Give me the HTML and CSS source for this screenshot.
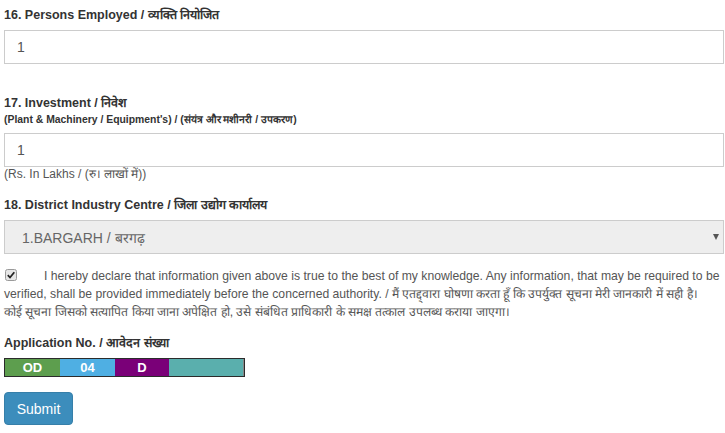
FILE: index.html
```html
<!DOCTYPE html>
<html lang="en">
<head>
  <meta charset="UTF-8" />
  <title>Application Form</title>
  <link rel="stylesheet" href="styles.css">
</head>
<body>

  <div class="form-wrap">

    <!-- 16 -->
    <div class="form-group">
      <label class="field-label">16. Persons Employed / व्यक्ति नियोजित</label>
      <div class="text-box">1</div>
    </div>

    <!-- 17 -->
    <div class="form-group">
      <label class="field-label tight">17. Investment / निवेश</label>
      <div class="sub-label">(Plant &amp; Machinery / Equipment's) / (संयंत्र और मशीनरी / उपकरण)</div>
      <div class="text-box">1</div>
      <div class="help-text">(Rs. In Lakhs / (रु। लाखों में))</div>
    </div>

    <!-- 18 -->
    <div class="form-group">
      <label class="field-label">18. District Industry Centre / जिला उद्योग कार्यालय</label>
      <div class="select-box">
        <span>1.BARGARH / बरगढ़</span>
        <span class="caret"></span>
      </div>
    </div>

    <!-- declaration -->
    <p class="declare">
      <svg class="check" width="12" height="12" viewBox="0 0 12 12">
        <rect x="0.5" y="0.5" width="11" height="11" rx="2" fill="#e6e6e6" stroke="#9a9a9a" />
        <path d="M2.8 6.2 L5 8.5 L9.3 3.2" fill="none" stroke="#222" stroke-width="1.8" />
      </svg>I hereby declare that information given above is true to the best of my knowledge. Any information, that may be required to be verified, shall be provided immediately before the concerned authority. / मैं एतद्द्वारा घोषणा करता हूँ कि उपर्युक्त सूचना मेरी जानकारी में सही है।<br>कोई सूचना जिसको सत्यापित किया जाना अपेक्षित हो, उसे संबंधित प्राधिकारी के समक्ष तत्काल उपलब्ध कराया जाएगा।
    </p>

    <!-- application no -->
    <label class="field-label">Application No. / आवेदन संख्या</label>
    <div class="app-no">
      <span class="seg seg-green">OD</span>
      <span class="seg seg-blue">04</span>
      <span class="seg seg-purple">D</span>
      <span class="seg seg-teal"></span>
    </div>

    <button class="btn-submit">Submit</button>

  </div>

</body>
</html>
```

FILE: styles.css
```css
body, html {
  margin: 0;
  padding: 0;
  background: #fff;
  font-family: "Liberation Sans", Arial, sans-serif;
  color: #333;
}

.form-wrap {
  padding: 8px 1px 0 4px;
}

.form-group {
  margin-bottom: 32px;
}

.form-group:nth-child(2) {
  margin-bottom: 17px;
}

.form-group:nth-child(3) {
  margin-bottom: 13px;
}

.field-label {
  display: block;
  font-size: 12.5px;
  font-weight: bold;
  line-height: 15px;
  margin-bottom: 7px;
  color: #333;
}

.field-label.tight {
  margin-bottom: 2px;
}

.sub-label {
  font-size: 10.4px;
  font-weight: bold;
  line-height: 13px;
  margin-bottom: 7px;
}

.text-box {
  height: 34px;
  box-sizing: border-box;
  border: 1px solid #ccc;
  padding: 0 12px;
  display: flex;
  align-items: center;
  font-size: 14px;
  color: #555;
  background: #fff;
}

.help-text {
  font-size: 12px;
  line-height: 14px;
  color: #555;
}

.select-box {
  height: 34px;
  box-sizing: border-box;
  border: 1px solid #ccc;
  background: #eee;
  padding: 0 4px 0 17px;
  display: flex;
  align-items: center;
  justify-content: space-between;
  font-size: 14px;
  color: #666;
}

.caret {
  width: 0;
  height: 0;
  border-left: 3.5px solid transparent;
  border-right: 3.5px solid transparent;
  border-top: 6px solid #555;
}

.declare {
  margin: 0 0 15px;
  padding-right: 2px;
  font-size: 12.2px;
  line-height: 18px;
  color: #555;
}

.check {
  vertical-align: -1px;
  margin: 0 27px 0 1px;
}

.app-no {
  display: flex;
  width: 241px;
  height: 19px;
  box-sizing: border-box;
  border: 1px solid #2b2b2b;
  margin-bottom: 15px;
}

.seg {
  width: 55px;
  text-align: center;
  color: #fff;
  font-size: 13px;
  font-weight: bold;
  line-height: 17px;
}

.seg-green { background: #5d9e4e; }
.seg-blue { background: #4fafe3; }
.seg-purple { background: #7a0078; width: 54px; }
.seg-teal {
  background: #5aafad;
  flex: 1;
  border-right: 1px solid #888;
}

.btn-submit {
  display: block;
  height: 33px;
  width: 69px;
  border: 1px solid #367fa9;
  border-radius: 4px;
  background: #3c8dbc;
  color: #fff;
  font-family: "Liberation Sans", Arial, sans-serif;
  font-size: 14px;
  padding: 0;
  cursor: pointer;
}
```
